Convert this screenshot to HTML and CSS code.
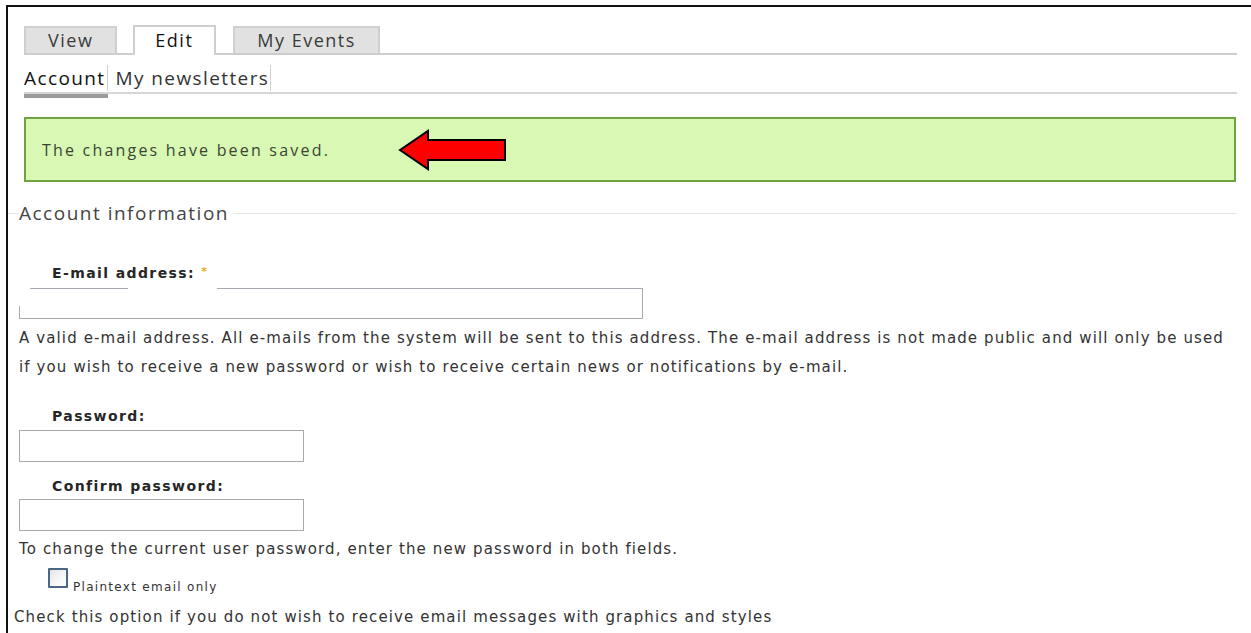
FILE: index.html
```html
<!DOCTYPE html>
<html lang="en">
<head>
<meta charset="utf-8">
<title>Account</title>
<link rel="stylesheet" href="styles.css">
</head>
<body>
<div class="frame">
  <nav class="tabs-primary">
    <a class="tab">View</a>
    <a class="tab active">Edit</a>
    <a class="tab">My Events</a>
  </nav>
  <nav class="tabs-secondary">
    <a class="sub active"><span>Account</span></a>
    <a class="sub"><span>My newsletters</span></a>
  </nav>

  <div class="messages">
    <span class="msg-text">The changes have been saved.</span>
    <svg class="pointer" width="110" height="42" viewBox="0 0 110 42">
      <polygon points="2,21 30,2 30,11 107,11 107,31 30,31 30,40" fill="#ff0000" stroke="#000" stroke-width="2" stroke-linejoin="miter"/>
    </svg>
  </div>

  <fieldset class="account">
    <legend>Account information</legend>

    <div class="form-item">
      <label class="field-label">E-mail address: <span class="req">*</span></label>
      <input class="email-input" type="text">
      <div class="desc">A valid e-mail address. All e-mails from the system will be sent to this address. The e-mail address is not made public and will only be used if you wish to receive a new password or wish to receive certain news or notifications by e-mail.</div>
    </div>

    <div class="form-item pass">
      <label class="field-label">Password:</label>
      <input class="text-input" type="password">
    </div>
    <div class="form-item confirm">
      <label class="field-label">Confirm password:</label>
      <input class="text-input" type="password">
    </div>
    <div class="desc pass-desc">To change the current user password, enter the new password in both fields.</div>

    <label class="check-row">
      <span class="checkbox"></span>
      <span class="check-label">Plaintext email only</span>
    </label>
  </fieldset>
  <div class="desc check-desc">Check this option if you do not wish to receive email messages with graphics and styles</div>
</div>
</body>
</html>
```

FILE: styles.css
```css
html, body {
  margin: 0;
  padding: 0;
  background: #fff;
}

body {
  font-family: "Open Sans", "DejaVu Sans", sans-serif;
  color: #333;
  overflow: hidden;
}

.frame {
  margin: 5px 0 0 6px;
  border-top: 2px solid #111;
  border-left: 2px solid #111;
  min-height: 640px;
  padding: 19px 14px 0 16px;
  box-sizing: border-box;
}

/* primary tabs */
.tabs-primary {
  display: flex;
  align-items: flex-end;
  border-bottom: 2px solid #cdcdcd;
  height: 27px;
}

.tab {
  display: block;
  box-sizing: border-box;
  height: 27px;
  padding: 0 22px;
  margin-right: 17px;
  border: 2px solid #cfcfcf;
  border-bottom: none;
  background: #e1e1e1;
  font-size: 18px;
  letter-spacing: 1.5px;
  line-height: 25px;
  color: #3a3a3a;
}

.tab:first-child {
  margin-right: 16px;
}

.tab.active {
  padding: 1px 21px 0 20px;
  background: #fff;
  color: #111;
  height: 30px;
  margin-bottom: -2px;
}

/* secondary tabs */
.tabs-secondary {
  display: flex;
  padding: 10px 0 1px;
  border-bottom: 2px solid #d6d6d6;
}

.sub {
  display: block;
  font-size: 19px;
  letter-spacing: 1.4px;
  line-height: 26px;
  color: #333;
}

.sub span {
  display: block;
  border-right: 1px solid #cfcfcf;
  padding-right: 1px;
}

.sub + .sub span {
  padding-left: 8px;
}

.sub.active {
  color: #111;
  padding-bottom: 3px;
  border-bottom: 4px solid #9a9a9a;
  margin-bottom: -7px;
}

/* status message */
.messages {
  display: flex;
  align-items: center;
  box-sizing: border-box;
  height: 65px;
  margin: 23px 1px 0 0;
  padding-left: 16px;
  background: #d8f8b4;
  border: 2px solid #6fa340;
}

.msg-text {
  font-size: 16px;
  letter-spacing: 2.2px;
  color: #3b4536;
}

.pointer {
  display: block;
  margin-left: 68px;
}

/* account fieldset */
.account {
  margin: 19px 0 0 -16px;
  padding: 0 0 0 11px;
  border: none;
  border-top: 1px solid #e6e6e6;
  min-width: 0;
}

.account legend {
  padding: 0 4px 0 0;
  font-size: 19px;
  letter-spacing: 1.5px;
  line-height: 24px;
  color: #444;
}

.form-item {
  display: flex;
  flex-direction: column;
  align-items: flex-start;
}

.field-label {
  display: block;
  margin: 37px 0 0 33px;
  font-family: "DejaVu Sans", sans-serif;
  font-weight: bold;
  font-size: 14px;
  letter-spacing: 1.4px;
  line-height: 20px;
  color: #262626;
}

.req {
  color: #f2a91b;
  font-size: 11px;
  vertical-align: 3px;
}

.email-input {
  display: block;
  box-sizing: border-box;
  width: 624px;
  height: 31px;
  margin: 5px 0 0;
  padding: 0;
  border: none;
  border-right: 1px solid #a7abb1;
  border-bottom: 1px solid #a7abb1;
  background:
    linear-gradient(#a7abb1, #a7abb1) 11px 0 / 98px 1px no-repeat,
    linear-gradient(#a7abb1, #a7abb1) 198px 0 / calc(100% - 198px) 1px no-repeat,
    linear-gradient(#a7abb1, #a7abb1) 0 100% / 1px 12px no-repeat,
    #fff;
}

.text-input {
  display: block;
  box-sizing: border-box;
  width: 285px;
  height: 32px;
  margin: 4px 0 0;
  padding: 0;
  border: 1px solid #a9a9a9;
  background: #fff;
}

.desc {
  margin-top: 5px;
  font-family: "DejaVu Sans", sans-serif;
  font-size: 15px;
  letter-spacing: 1.12px;
  line-height: 29px;
  color: #333;
}

.form-item.pass .field-label {
  margin-top: 24px;
}

.form-item.confirm .field-label {
  margin-top: 14px;
}

.form-item.confirm .text-input {
  margin-top: 3px;
}

.pass-desc {
  margin-top: 4px;
}

.check-row {
  display: flex;
  align-items: flex-end;
  margin: 4px 0 0 29px;
}

.checkbox {
  display: block;
  box-sizing: border-box;
  width: 20px;
  height: 20px;
  border: 2px solid #4a6786;
  border-radius: 1px;
  background: linear-gradient(135deg, #e4e4e4, #f8f8f8 60%, #fff);
}

.check-label {
  margin: 0 0 -6px 5px;
  font-family: "DejaVu Sans", sans-serif;
  font-size: 12px;
  letter-spacing: 1.3px;
  line-height: 14px;
  color: #333;
}

.check-desc {
  margin: 15px 0 0 -10px;
}
```
